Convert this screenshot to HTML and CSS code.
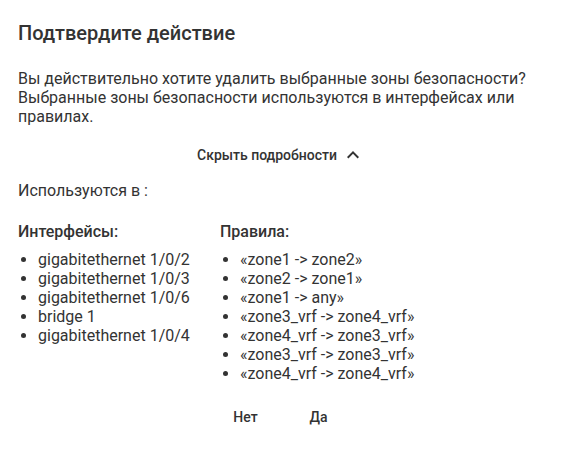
FILE: index.html
```html
<!DOCTYPE html>
<html lang="ru">
<head>
<meta charset="utf-8">
<link rel="stylesheet" href="styles.css">
</head>
<body>
<div class="dialog">
  <h2 class="title">Подтвердите действие</h2>
  <p class="message">Вы действительно хотите удалить выбранные зоны безопасности? Выбранные зоны безопасности используются в интерфейсах или правилах.</p>
  <div class="toggle-row">
    <button class="toggle">Скрыть подробности
      <svg class="chev" width="12" height="8" viewBox="0 0 12 8"><path d="M1.4 7.4 6 2.8l4.6 4.6L12 6 6 0 0 6z" fill="currentColor"/></svg>
    </button>
  </div>
  <p class="used">Используются в :</p>
  <div class="columns">
    <div class="col col-if">
      <h3 class="col-title">Интерфейсы:</h3>
      <ul class="list">
        <li>gigabitethernet 1/0/2</li>
        <li>gigabitethernet 1/0/3</li>
        <li>gigabitethernet 1/0/6</li>
        <li>bridge 1</li>
        <li>gigabitethernet 1/0/4</li>
      </ul>
    </div>
    <div class="col">
      <h3 class="col-title">Правила:</h3>
      <ul class="list">
        <li>«zone1 -&gt; zone2»</li>
        <li>«zone2 -&gt; zone1»</li>
        <li>«zone1 -&gt; any»</li>
        <li>«zone3_vrf -&gt; zone4_vrf»</li>
        <li>«zone4_vrf -&gt; zone3_vrf»</li>
        <li>«zone3_vrf -&gt; zone3_vrf»</li>
        <li>«zone4_vrf -&gt; zone4_vrf»</li>
      </ul>
    </div>
  </div>
  <div class="actions">
    <button class="btn">Нет</button>
    <button class="btn">Да</button>
  </div>
</div>
</body>
</html>
```

FILE: styles.css
```css
html, body {
  margin: 0;
  background: #fff;
}
body {
  font-family: Roboto, "Noto Sans", sans-serif;
  color: #333;
  font-size: 16px;
}
.dialog {
  padding: 21px 22px 0 18px;
}
.title {
  margin: 0;
  font-size: 20px;
  font-weight: 500;
  line-height: 24px;
}
.message {
  margin: 23.5px 0 0;
  line-height: 19px;
}
.toggle-row {
  display: flex;
  justify-content: center;
  margin-top: 11.5px;
}
.toggle {
  display: flex;
  align-items: center;
  gap: 10px;
  height: 36px;
  padding: 0 16px 0 8px;
  border: 0;
  background: none;
  font-family: inherit;
  font-size: 14px;
  font-weight: 500;
  color: #333;
}
.chev {
  display: block;
}
.used {
  margin: 7.5px 0 0;
  line-height: 19px;
}
.columns {
  display: flex;
  margin-top: 22px;
}
.col-if {
  width: 202px;
}
.col-title {
  margin: 0;
  font-size: 16px;
  font-weight: 500;
  line-height: 19px;
}
.list {
  margin: 9px 0 0;
  padding: 0 0 0 20px;
  line-height: 19px;
}
.actions {
  display: flex;
  justify-content: center;
  gap: 9px;
  margin-top: 16.5px;
}
.btn {
  height: 36px;
  min-width: 64px;
  padding: 0 8px;
  border: 0;
  background: none;
  font-family: inherit;
  font-size: 14px;
  font-weight: 500;
  color: #333;
}
```
